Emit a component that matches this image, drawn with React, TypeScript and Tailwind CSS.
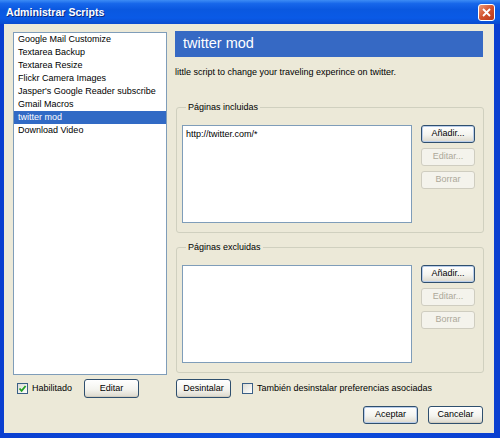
import React from "react";

const scripts = [
  "Google Mail Customize",
  "Textarea Backup",
  "Textarea Resize",
  "Flickr Camera Images",
  "Jasper's Google Reader subscribe",
  "Gmail Macros",
  "twitter mod",
  "Download Video",
];

function XpButton({
  children,
  width = "w-[55px]",
  height = "h-[18px]",
  primary = false,
  disabled = false,
}: {
  children: React.ReactNode;
  width?: string;
  height?: string;
  primary?: boolean;
  disabled?: boolean;
}) {
  if (disabled) {
    return (
      <button
        disabled
        className={`${width} ${height} flex items-center justify-center rounded-[3px] border border-[#cfcdc0] bg-[#f4f3ec] text-[#aca899]`}
      >
        {children}
      </button>
    );
  }
  return (
    <button
      className={`${width} ${height} flex items-center justify-center rounded-[3px] border border-[#2f4f6e] bg-[linear-gradient(to_bottom,#ffffff,#f4f4ef_55%,#dcd8cc)] text-black ${
        primary ? "shadow-[inset_0_0_0_1px_#b9cdea]" : "shadow-[inset_0_-1px_0_#d2cdbf]"
      }`}
    >
      {children}
    </button>
  );
}

function XpCheckbox({ checked = false }: { checked?: boolean }) {
  return (
    <span className="flex h-[11px] w-[11px] shrink-0 items-center justify-center border border-[#3a5f86] bg-[linear-gradient(135deg,#dcdcd4,#ffffff)]">
      {checked && (
        <svg width="9" height="9" viewBox="0 0 9 9">
          <path d="M1.5 4.5 L3.6 6.8 L7.6 2" fill="none" stroke="#21a121" strokeWidth="1.8" />
        </svg>
      )}
    </span>
  );
}

function PageGroup({ title, pages }: { title: string; pages: string[] }) {
  return (
    <fieldset className="rounded-[3px] border border-[#d0d0bf] pb-[9px] pl-[5px] pr-[8px] pt-[11px]">
      <legend className="ml-[4px] px-[2px] leading-[13px]">{title}</legend>
      <div className="flex gap-[9px]">
        <div className="h-[98px] w-[230px] border border-[#7f9db9] bg-white px-[3px] pt-[2px]">
          {pages.map((p) => (
            <div key={p} className="leading-[13px]">
              {p}
            </div>
          ))}
        </div>
        <div className="flex flex-col gap-[5px]">
          <XpButton width="w-[54px]" primary>
            Añadir...
          </XpButton>
          <XpButton width="w-[54px]" disabled>
            Editar...
          </XpButton>
          <XpButton width="w-[54px]" disabled>
            Borrar
          </XpButton>
        </div>
      </div>
    </fieldset>
  );
}

export default function App() {
  return (
    <div className="flex h-[438px] w-[500px] flex-col bg-[linear-gradient(to_right,#0a3fd0,#0c4fe0_50%,#0a3fd0)] font-['Liberation_Sans',Arial,sans-serif] text-[9px] text-black">
      {/* title bar */}
      <div className="flex h-[24px] shrink-0 items-center justify-between pl-[6px] pr-[5px] pt-[1px] bg-[linear-gradient(to_bottom,#3d8cf5,#1767ea_15%,#0a58e0_40%,#0a5ae6_75%,#0a4cd0)]">
        <span className="text-[10.6px] font-bold text-white [text-shadow:1px_1px_0_#0a2a80]">
          Administrar Scripts
        </span>
        <span className="flex h-[17px] w-[17px] items-center justify-center rounded-[3px] border border-white bg-[linear-gradient(135deg,#ec9a78,#d2522d_50%,#b8391a)]">
          <svg width="9" height="9" viewBox="0 0 9 9">
            <path d="M1 1 L8 8 M8 1 L1 8" stroke="white" strokeWidth="1.8" />
          </svg>
        </span>
      </div>

      {/* client area */}
      <div className="mb-[5px] ml-[4px] mr-[6px] flex flex-1 flex-col bg-[#ece9d8] pl-[9px] pr-[11px] pt-[7px]">
        <div className="flex gap-[8px]">
          <div className="mt-[1px] h-[343px] w-[154px] border border-[#7f9db9] bg-white">
            {scripts.map((s) => (
              <div
                key={s}
                className={`h-[13px] pl-[4px] leading-[13px] ${
                  s === "twitter mod" ? "bg-[#316ac5] text-white" : ""
                }`}
              >
                {s}
              </div>
            ))}
          </div>

          <div className="flex w-[308px] flex-col">
            <div className="flex h-[26px] items-center bg-[#3669c4] pl-[8px] text-[14.5px] text-white">
              twitter mod
            </div>
            <p className="mt-[9px] leading-[13px]">
              little script to change your traveling experince on twitter.
            </p>
            <div className="ml-[1px] mt-[22px] flex flex-col gap-[8px]">
              <PageGroup title="Páginas incluidas" pages={["http://twitter.com/*"]} />
              <PageGroup title="Páginas excluidas" pages={[]} />
            </div>
          </div>
        </div>

        <div className="mt-[4px] flex gap-[8px]">
          <div className="flex w-[154px] items-center">
            <div className="ml-[4px] flex items-center gap-[4px]">
              <XpCheckbox checked />
              <span>Habilitado</span>
            </div>
            <div className="ml-[12px]">
              <XpButton height="h-[19px]">Editar</XpButton>
            </div>
          </div>
          <div className="flex w-[308px] items-center">
            <div className="ml-[1px]">
              <XpButton height="h-[19px]">Desintalar</XpButton>
            </div>
            <div className="ml-[11px] flex items-center gap-[4px]">
              <XpCheckbox />
              <span>También desinstalar preferencias asociadas</span>
            </div>
          </div>
        </div>

        <div className="mt-[8px] flex justify-end gap-[10px]">
          <XpButton primary>Aceptar</XpButton>
          <XpButton>Cancelar</XpButton>
        </div>
      </div>
    </div>
  );
}
